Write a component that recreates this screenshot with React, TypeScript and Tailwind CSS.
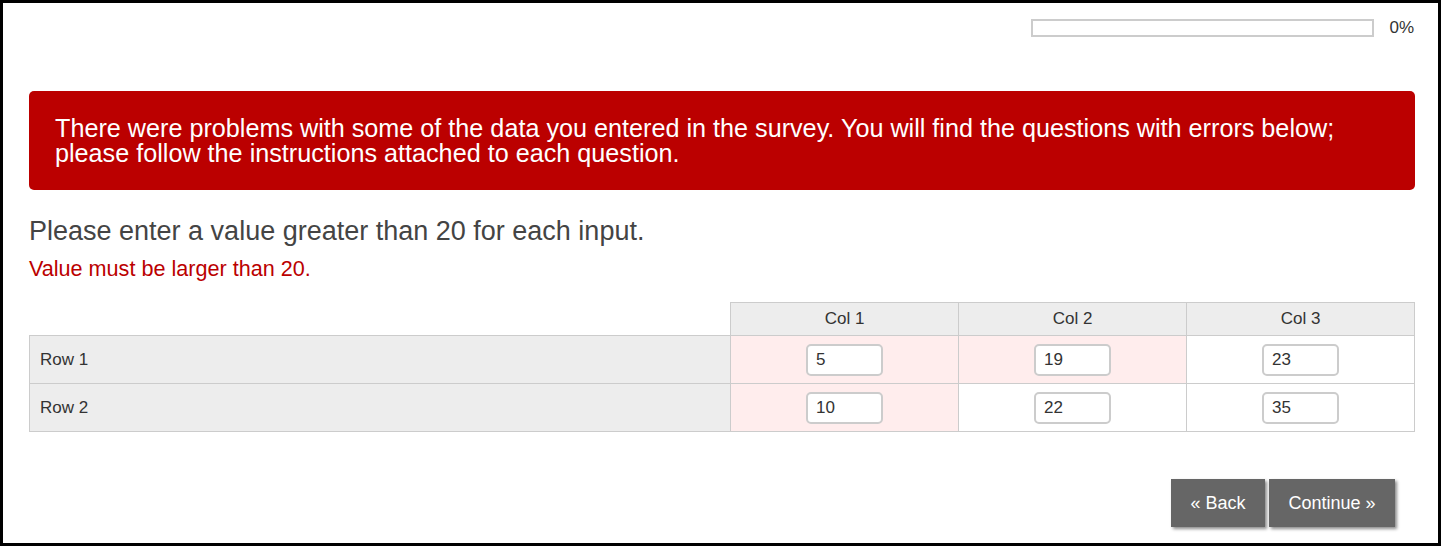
const rows = [
  { label: 'Row 1', cells: [{ v: '5', err: true }, { v: '19', err: true }, { v: '23', err: false }] },
  { label: 'Row 2', cells: [{ v: '10', err: true }, { v: '22', err: false }, { v: '35', err: false }] },
]

const cols = ['Col 1', 'Col 2', 'Col 3']

export default function App() {
  return (
    <div
      className="w-[1441px] h-[546px] border-[3px] border-black bg-white pl-[26px] pr-[23px] pt-[16px] text-[#333]"
      style={{ fontFamily: '"Liberation Sans", Arial, sans-serif' }}
    >
      {/* progress */}
      <div className="flex h-[18px] items-center justify-end gap-[15px] pr-px">
        <div className="h-[18px] w-[343px] border-2 border-[#ccc] bg-white" />
        <span className="text-[17px] leading-[20px] text-[#333]">0%</span>
      </div>

      {/* error banner */}
      <div className="mt-[54px] rounded-[5px] bg-[#bb0000] px-[26px] pt-[25px] pb-[24px] text-[25.2px] leading-[25px] text-white">
        <div>There were problems with some of the data you entered in the survey. You will find the questions with errors below;</div>
        <div>please follow the instructions attached to each question.</div>
      </div>

      <div className="mt-[26px] text-[27px] leading-[31px] text-[#444]">
        Please enter a value greater than 20 for each input.
      </div>
      <div className="mt-[10px] text-[21.6px] leading-[24px] text-[#bb0000]">Value must be larger than 20.</div>

      {/* matrix */}
      <div className="mt-[21px] text-[17px] text-[#333]">
        <div className="flex h-[33px]">
          <div className="w-[701px]" />
          {cols.map((c, i) => (
            <div
              key={c}
              className={`flex items-center justify-center border-t border-l border-[#ccc] bg-[#ededed] ${
                i === 2 ? 'w-[229px] border-r' : 'w-[228px]'
              }`}
            >
              {c}
            </div>
          ))}
        </div>
        {rows.map((r, ri) => (
          <div key={r.label} className={`flex ${ri === 1 ? 'h-[49px] border-b border-[#ccc]' : 'h-[48px]'}`}>
            <div className="flex w-[701px] items-center border-t border-l border-[#ccc] bg-[#ededed] pl-[10px]">
              {r.label}
            </div>
            {r.cells.map((c, i) => (
              <div
                key={i}
                className={`flex items-center justify-center border-t border-l border-[#ccc] ${
                  c.err ? 'bg-[#ffeded]' : 'bg-white'
                } ${i === 2 ? 'w-[229px] border-r' : 'w-[228px]'}`}
              >
                <input
                  defaultValue={c.v}
                  className="h-[32px] w-[77px] rounded-[5px] border-2 border-[#ccc] bg-white pl-[8px] text-[17px] text-[#333] outline-none"
                />
              </div>
            ))}
          </div>
        ))}
      </div>

      {/* nav */}
      <div className="mt-[47px] flex justify-end gap-[4px] pr-[20px]">
        <button className="h-[48px] w-[94px] bg-[#666] text-[18px] text-white shadow-[2px_2px_3px_rgba(0,0,0,0.45)]">
          « Back
        </button>
        <button className="h-[48px] w-[126px] bg-[#666] text-[18px] text-white shadow-[2px_2px_3px_rgba(0,0,0,0.45)]">
          Continue »
        </button>
      </div>
    </div>
  )
}
